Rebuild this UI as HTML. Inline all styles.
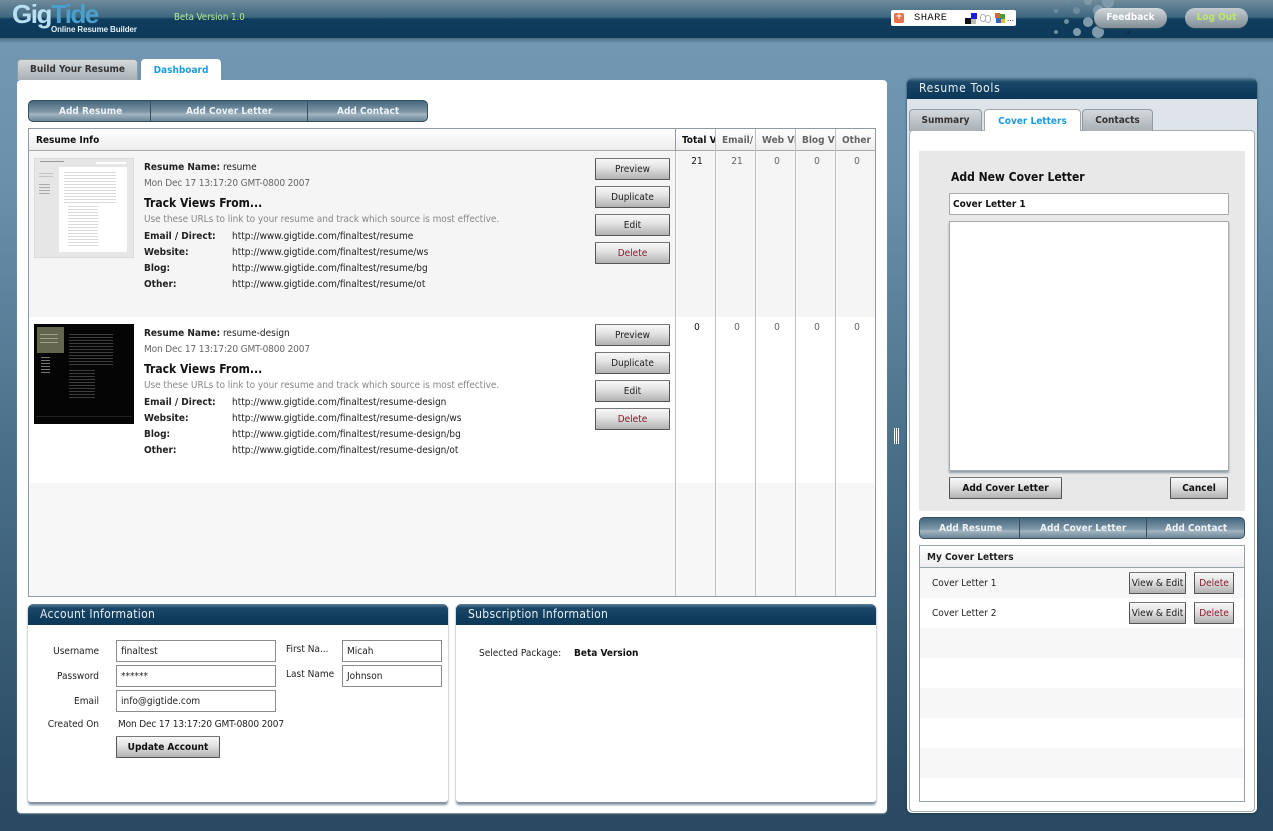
<!DOCTYPE html>
<html><head><meta charset="utf-8"><style>
html,body{margin:0;padding:0}
body{width:1273px;height:831px;position:relative;overflow:hidden;font-family:"DejaVu Sans Condensed","DejaVu Sans",sans-serif;font-stretch:condensed;font-size:10px;color:#222;background:linear-gradient(#7197b3 42px,#6a90ac 180px,#4a7089 450px,#2b4c64 780px,#2a4a62)}
div,span{position:absolute;white-space:nowrap;box-sizing:border-box}
.hdr{left:0;top:0;width:1273px;height:38px;background:linear-gradient(#6f8a9b,#3e6880 17px,#0f3d5e 19px,#0e3a5a 37px)}
.hs{left:0;top:38px;width:1273px;height:5px;background:linear-gradient(#4d6c80,#7197b3)}
.t{line-height:12px;margin-top:1px}
.b{font-weight:bold}
.d{letter-spacing:-.15px}
.h{font-size:12px;line-height:14px;font-weight:bold;color:#111}
.btn{border:1px solid #555;border-top-color:#777;height:22px;line-height:22px;text-align:center;background:linear-gradient(#f7f7f7,#e4e4e4 40%,#b2b2b2);color:#222;border-radius:1px}
.del{color:#8c1c2c}
.bar{height:22px;background:linear-gradient(#46677e,#7f97a8 55%,#a4b5c1 65%,#6a8698);border:1px solid #37505f;border-radius:5px;color:#eef2f5;font-weight:bold;line-height:22px;text-align:center}
.bar i{position:absolute;top:0;width:1px;height:20px;background:#37505f}
.bar span{top:0}
.inp{background:#fff;border:1px solid #8a8a8a;height:22px;line-height:22px;padding-left:4px}
.ph{height:21px;background:linear-gradient(#5c7f95,#1b4868 4px,#0f3c5c 14px,#0d3a5a);color:#e8eef2;font-size:12px;line-height:20px;letter-spacing:.3px;border-radius:5px 5px 0 0}
.pan{background:#fff;box-shadow:0 3px 2px #7e929f;border-radius:0 0 3px 3px}
.vl{width:1px;background:#bcc3c8;top:129px;height:467px}
.tab{height:21px;background:linear-gradient(#d4d9dc,#a9b0b5);border:1px solid #909aa0;border-bottom:0;border-radius:4px 4px 0 0;font-weight:bold;color:#333;text-align:center;line-height:19px}
.tabon{background:#fff;color:#1d9ae0;line-height:23px;border-color:#a0a8ae}
.row{left:920px;width:324px;height:30px}
.dot{border-radius:50%;background:#6d8ca0}
</style></head><body>
<div class="hdr"></div><div class="hs"></div>

<div class="t b" style="left:12px;top:-1px;font-family:'Liberation Sans',sans-serif;font-stretch:normal;font-size:26px;line-height:28px;letter-spacing:-1.5px;color:#b9dff2">Gig<span style="position:static;color:#4aa0cc">Tide</span></div>
<div class="t b" style="left:51px;top:24px;line-height:9px;font-family:'Liberation Sans',sans-serif;font-stretch:normal;font-size:8px;letter-spacing:-.1px;color:#e4edf2">Online Resume Builder</div>
<div class="t" style="left:174px;top:11px;color:#b6e98e;font-size:9.6px">Beta Version 1.0</div>

<div style="left:891px;top:10px;width:125px;height:16px;background:#fff;border-radius:2px"></div>
<div style="left:894px;top:13px;width:10px;height:10px;background:#e8734a;border-radius:2px"></div>
<div class="t" style="left:895px;top:11px;width:8px;text-align:center;color:#fff;font-size:9px;line-height:11px;font-weight:bold">+</div>
<div class="t" style="left:914px;top:11px;font-family:'Liberation Mono',monospace;font-stretch:normal;font-size:10.5px;letter-spacing:.4px;color:#111">SHARE</div>
<div style="left:965px;top:18px;width:6px;height:6px;background:#111"></div>
<div style="left:971px;top:13px;width:6px;height:6px;background:#1c1ce0"></div>
<div style="left:971px;top:19px;width:5px;height:5px;background:#bbb"></div>
<div style="left:980px;top:14px;width:6px;height:8px;border:1px solid #aaa;border-radius:3px"></div>
<div style="left:985px;top:15px;width:6px;height:8px;border:1px solid #aaa;border-radius:3px"></div>
<div style="left:995px;top:13px;width:5px;height:5px;background:#d9662c"></div>
<div style="left:1000px;top:14px;width:5px;height:5px;background:#4f9b3a"></div>
<div style="left:996px;top:18px;width:5px;height:5px;background:#3768b8"></div>
<div style="left:1001px;top:19px;width:4px;height:4px;background:#e2c02e"></div>
<div class="t" style="left:1007px;top:13px;font-size:8px;line-height:10px;color:#111">...</div>

<div class="dot" style="left:1054px;top:9px;width:4px;height:4px"></div>
<div class="dot" style="left:1073px;top:7px;width:7px;height:7px"></div>
<div class="dot" style="left:1064px;top:19px;width:5px;height:5px"></div>
<div class="dot" style="left:1083px;top:17px;width:10px;height:10px;background:#7f9aab"></div>
<div class="dot" style="left:1054px;top:30px;width:4px;height:4px"></div>
<div class="dot" style="left:1073px;top:28px;width:8px;height:8px;background:#7f9aab"></div>
<div class="dot" style="left:1092px;top:26px;width:12px;height:12px;background:#7f9aab"></div>
<div class="dot" style="left:1065px;top:-1px;width:4px;height:4px"></div>
<div class="dot" style="left:1084px;top:-3px;width:8px;height:8px;background:#7f9aab"></div>
<div class="dot" style="left:1102px;top:-4px;width:12px;height:12px;background:#7f9aab"></div>
<div class="dot" style="left:1093px;top:5px;width:11px;height:11px;background:#7f9aab"></div>
<div class="dot" style="left:1127px;top:31px;width:3px;height:3px;background:#0e2c44"></div>
<div style="left:1104px;top:29px;width:7px;height:7px;background:#0e3a5a"></div>

<div class="b" style="left:1094px;top:8px;width:73px;height:20px;border-radius:10px;background:linear-gradient(#d3d9dc,#a8b2b8 50%,#7f8e97);box-shadow:0 1px 1px #2c4c60;color:#fff;text-align:center;line-height:20px;font-size:10px">Feedback</div>
<div class="b" style="left:1185px;top:8px;width:63px;height:20px;border-radius:10px;background:linear-gradient(#c4ccd0,#a2adb3 50%,#7f8e97);box-shadow:0 1px 1px #2c4c60;color:#bde96c;text-align:center;line-height:20px;font-size:10px">Log Out</div>

<!-- main tabs -->
<div class="tab" style="left:17px;top:59px;width:121px;">Build Your Resume</div>
<div class="tab tabon" style="left:141px;top:59px;width:80px;border:0">Dashboard</div>
<div style="left:17px;top:80px;width:870px;height:733px;background:#fff;border-radius:4px;box-shadow:0 1px 1px #8a9aa5"></div>

<div class="bar" style="left:28px;top:100px;width:400px"><i style="left:121px"></i><i style="left:278px"></i>
<span style="left:30px">Add Resume</span><span style="left:157px">Add Cover Letter</span><span style="left:308px">Add Contact</span></div>

<!-- table -->
<div style="left:28px;top:128px;width:848px;height:469px;border:1px solid #8f9aa2;background:#f7f7f7"></div>
<div style="left:29px;top:129px;width:846px;height:22px;background:linear-gradient(#fff,#ededed);border-bottom:1px solid #a3abb1"></div>
<div style="left:29px;top:151px;width:846px;height:166px;background:#f5f5f5"></div>
<div style="left:29px;top:317px;width:846px;height:166px;background:#fff"></div>
<div class="vl" style="left:675px"></div><div class="vl" style="left:715px"></div><div class="vl" style="left:755px"></div><div class="vl" style="left:795px"></div><div class="vl" style="left:835px"></div>
<div class="vl" style="left:675px;background:#8f9aa2;height:22px"></div>
<div class="t b" style="left:36px;top:134px;color:#111">Resume Info</div>
<div class="t b" style="left:682px;top:134px;width:33px;overflow:hidden;color:#111">Total Views</div>
<div class="t b" style="left:722px;top:134px;width:32px;overflow:hidden;color:#666">Email/ Direct</div>
<div class="t b" style="left:762px;top:134px;width:33px;overflow:hidden;color:#666">Web Views</div>
<div class="t b" style="left:802px;top:134px;width:33px;overflow:hidden;color:#666">Blog Views</div>
<div class="t b" style="left:842px;top:134px;width:32px;overflow:hidden;color:#666">Other</div>

<!-- thumbnails -->
<div style="left:34px;top:158px;width:100px;height:100px;background:#e6e6e6;border:1px solid #dadada"></div>
<div style="left:59px;top:167px;width:68px;height:85px;background:#fff"></div>
<div style="left:40px;top:161px;width:24px;height:1px;background:#999"></div>
<div style="left:96px;top:162px;width:30px;height:2px;background:#fff"></div>
<div style="left:39px;top:173px;width:14px;height:6px;background:repeating-linear-gradient(#c4c4c4 0 1px,transparent 1px 3px)"></div>
<div style="left:39px;top:184px;width:11px;height:12px;background:repeating-linear-gradient(#aaa 0 1px,transparent 1px 3px)"></div>
<div style="left:64px;top:172px;width:52px;height:32px;background:repeating-linear-gradient(#dadada 0 1px,transparent 1px 3px)"></div>
<div style="left:68px;top:206px;width:30px;height:40px;background:repeating-linear-gradient(#dadada 0 1px,transparent 1px 3px)"></div>

<div style="left:34px;top:324px;width:100px;height:100px;background:#050505"></div>
<div style="left:37px;top:327px;width:27px;height:26px;background:#64664c"></div>
<div style="left:40px;top:334px;width:18px;height:12px;background:repeating-linear-gradient(#a0a08c 0 1px,transparent 1px 4px)"></div>
<div style="left:41px;top:357px;width:9px;height:16px;background:repeating-linear-gradient(#777 0 1px,transparent 1px 3px)"></div>
<div style="left:69px;top:334px;width:44px;height:32px;background:repeating-linear-gradient(#3c3c3c 0 1px,transparent 1px 3px)"></div>
<div style="left:69px;top:370px;width:26px;height:30px;background:repeating-linear-gradient(#3c3c3c 0 1px,transparent 1px 3px)"></div>
<div style="left:36px;top:416px;width:96px;height:1px;background:#222"></div>

<!-- row 1 -->
<div class="t" style="left:144px;top:161px;color:#222"><b>Resume Name:</b> resume</div>
<div class="t d" style="left:144px;top:177px;color:#666">Mon Dec 17 13:17:20 GMT-0800 2007</div>
<div class="t h" style="left:144px;top:195px">Track Views From...</div>
<div class="t" style="left:144px;top:213px;color:#888;letter-spacing:-.06px">Use these URLs to link to your resume and track which source is most effective.</div>
<div class="t b" style="left:144px;top:230px">Email / Direct:</div><div class="t" style="left:232px;top:230px">http://www.gigtide.com/finaltest/resume</div>
<div class="t b" style="left:144px;top:246px">Website:</div><div class="t" style="left:232px;top:246px">http://www.gigtide.com/finaltest/resume/ws</div>
<div class="t b" style="left:144px;top:262px">Blog:</div><div class="t" style="left:232px;top:262px">http://www.gigtide.com/finaltest/resume/bg</div>
<div class="t b" style="left:144px;top:278px">Other:</div><div class="t" style="left:232px;top:278px">http://www.gigtide.com/finaltest/resume/ot</div>
<div class="btn" style="left:595px;top:158px;width:75px">Preview</div>
<div class="btn" style="left:595px;top:186px;width:75px">Duplicate</div>
<div class="btn" style="left:595px;top:214px;width:75px">Edit</div>
<div class="btn del" style="left:595px;top:242px;width:75px">Delete</div>
<div class="t" style="left:677px;top:155px;width:40px;text-align:center;color:#111">21</div>
<div class="t" style="left:717px;top:155px;width:40px;text-align:center;color:#666">21</div>
<div class="t" style="left:757px;top:155px;width:40px;text-align:center;color:#666">0</div>
<div class="t" style="left:797px;top:155px;width:40px;text-align:center;color:#666">0</div>
<div class="t" style="left:837px;top:155px;width:40px;text-align:center;color:#666">0</div>

<!-- row 2 -->
<div class="t" style="left:144px;top:327px;color:#222"><b>Resume Name:</b> resume-design</div>
<div class="t d" style="left:144px;top:343px;color:#666">Mon Dec 17 13:17:20 GMT-0800 2007</div>
<div class="t h" style="left:144px;top:361px">Track Views From...</div>
<div class="t" style="left:144px;top:379px;color:#888;letter-spacing:-.06px">Use these URLs to link to your resume and track which source is most effective.</div>
<div class="t b" style="left:144px;top:396px">Email / Direct:</div><div class="t" style="left:232px;top:396px">http://www.gigtide.com/finaltest/resume-design</div>
<div class="t b" style="left:144px;top:412px">Website:</div><div class="t" style="left:232px;top:412px">http://www.gigtide.com/finaltest/resume-design/ws</div>
<div class="t b" style="left:144px;top:428px">Blog:</div><div class="t" style="left:232px;top:428px">http://www.gigtide.com/finaltest/resume-design/bg</div>
<div class="t b" style="left:144px;top:444px">Other:</div><div class="t" style="left:232px;top:444px">http://www.gigtide.com/finaltest/resume-design/ot</div>
<div class="btn" style="left:595px;top:324px;width:75px">Preview</div>
<div class="btn" style="left:595px;top:352px;width:75px">Duplicate</div>
<div class="btn" style="left:595px;top:380px;width:75px">Edit</div>
<div class="btn del" style="left:595px;top:408px;width:75px">Delete</div>
<div class="t" style="left:677px;top:321px;width:40px;text-align:center;color:#111">0</div>
<div class="t" style="left:717px;top:321px;width:40px;text-align:center;color:#666">0</div>
<div class="t" style="left:757px;top:321px;width:40px;text-align:center;color:#666">0</div>
<div class="t" style="left:797px;top:321px;width:40px;text-align:center;color:#666">0</div>
<div class="t" style="left:837px;top:321px;width:40px;text-align:center;color:#666">0</div>

<!-- account -->
<div class="pan" style="left:28px;top:604px;width:420px;height:198px"></div>
<div class="ph" style="left:28px;top:604px;width:420px;padding-left:12px">Account Information</div>
<div class="pan" style="left:456px;top:604px;width:420px;height:198px"></div>
<div class="ph" style="left:456px;top:604px;width:420px;padding-left:12px">Subscription Information</div>
<div class="t" style="left:28px;top:645px;width:71px;text-align:right">Username</div>
<div class="t" style="left:28px;top:670px;width:71px;text-align:right">Password</div>
<div class="t" style="left:28px;top:695px;width:71px;text-align:right">Email</div>
<div class="t" style="left:28px;top:718px;width:71px;text-align:right">Created On</div>
<div class="inp" style="left:116px;top:640px;width:160px">finaltest</div>
<div class="inp" style="left:116px;top:665px;width:160px">******</div>
<div class="inp" style="left:116px;top:690px;width:160px">info@gigtide.com</div>
<div class="t d" style="left:118px;top:718px">Mon Dec 17 13:17:20 GMT-0800 2007</div>
<div class="btn b" style="left:116px;top:736px;width:104px;color:#111">Update Account</div>
<div class="t" style="left:286px;top:643px">First Na...</div>
<div class="t" style="left:286px;top:668px">Last Name</div>
<div class="inp" style="left:342px;top:640px;width:100px">Micah</div>
<div class="inp" style="left:342px;top:665px;width:100px">Johnson</div>
<div class="t" style="left:479px;top:647px">Selected Package:</div>
<div class="t b" style="left:574px;top:647px;color:#111">Beta Version</div>

<!-- splitter -->
<div style="left:894px;top:428px;width:1px;height:16px;background:#fff"></div>
<div style="left:896px;top:428px;width:1px;height:16px;background:#fff"></div>
<div style="left:898px;top:428px;width:1px;height:16px;background:#fff"></div>

<!-- right panel -->
<div style="left:907px;top:78px;width:350px;height:735px;background:linear-gradient(#dde3ea,#e6eaee 300px,#fff 380px);border-radius:5px;box-shadow:0 1px 2px #1f3a4e"></div>
<div class="ph" style="left:907px;top:78px;width:350px;padding-left:12px;line-height:21px;letter-spacing:.7px">Resume Tools</div>
<div style="left:909px;top:130px;width:346px;height:682px;background:#fff;border:1px solid #a6aeb4;border-radius:4px"></div>
<div class="tab" style="left:909px;top:109px;width:73px;height:22px;line-height:21px">Summary</div>
<div class="tab tabon" style="left:984px;top:109px;width:97px;height:22px;border-bottom:0">Cover Letters</div>
<div class="tab" style="left:1082px;top:109px;width:71px;height:22px;line-height:21px">Contacts</div>

<div style="left:919px;top:151px;width:326px;height:360px;background:#e8e8e8"></div>
<div class="t h" style="left:951px;top:169px;line-height:15px">Add New Cover Letter</div>
<div class="inp b" style="left:949px;top:193px;width:280px;color:#111;padding-left:3px;border-color:#aaa">Cover Letter 1</div>
<div style="left:949px;top:221px;width:280px;height:250px;background:#fff;border:1px solid #aaa;box-shadow:0 2px 2px #8ca0ad"></div>
<div class="btn b" style="left:949px;top:477px;width:113px;color:#111">Add Cover Letter</div>
<div class="btn b" style="left:1170px;top:477px;width:58px;color:#111">Cancel</div>

<div class="bar" style="left:919px;top:517px;width:326px"><i style="left:99px"></i><i style="left:226px"></i>
<span style="left:19px">Add Resume</span><span style="left:120px">Add Cover Letter</span><span style="left:245px">Add Contact</span></div>

<div style="left:919px;top:545px;width:326px;height:257px;border:1px solid #98a2a9;background:#fff"></div>
<div style="left:920px;top:546px;width:324px;height:22px;background:linear-gradient(#fff,#ededed);border-bottom:1px solid #98a2a9"></div>
<div class="t b" style="left:927px;top:551px;color:#222">My Cover Letters</div>
<div class="row" style="top:568px;background:#f7f7f7"></div>
<div class="row" style="top:628px;background:#f7f7f7"></div>
<div class="row" style="top:688px;background:#f7f7f7"></div>
<div class="row" style="top:748px;background:#f7f7f7"></div>
<div class="t" style="left:932px;top:577px">Cover Letter 1</div>
<div class="t" style="left:932px;top:607px">Cover Letter 2</div>
<div class="btn" style="left:1129px;top:572px;width:57px">View &amp; Edit</div>
<div class="btn" style="left:1129px;top:602px;width:57px">View &amp; Edit</div>
<div class="btn del" style="left:1194px;top:572px;width:40px">Delete</div>
<div class="btn del" style="left:1194px;top:602px;width:40px">Delete</div>
</body></html>
